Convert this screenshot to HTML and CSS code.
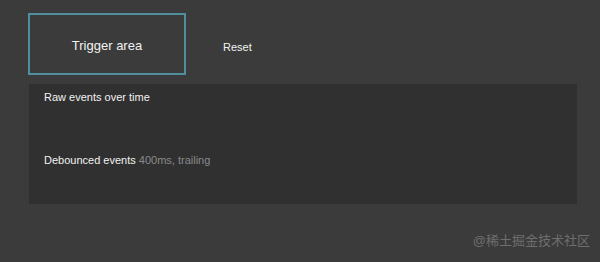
FILE: index.html
```html
<!DOCTYPE html>
<html lang="en">
<head>
  <meta charset="UTF-8">
  <title>Debounce demo</title>
  <link rel="stylesheet" href="styles.css">
</head>
<body>
  <div class="controls">
    <div class="trigger">Trigger area</div>
    <button class="reset">Reset</button>
  </div>

  <div class="timeline">
    <div class="row">
      <div class="label">Raw events over time</div>
    </div>
    <div class="row">
      <div class="label">Debounced events <span class="note">400ms, trailing</span></div>
    </div>
  </div>

  <div class="watermark">@稀土掘金技术社区</div>
</body>
</html>
```

FILE: styles.css
```css
body {
  margin: 0;
  padding: 13px 0 0 28px;
  background-color: #3b3b3b;
  font-family: "Liberation Sans", Arial, sans-serif;
  color: #f2f2f2;
  height: 262px;
  box-sizing: border-box;
  position: relative;
  overflow: hidden;
}

.controls {
  display: flex;
  align-items: center;
}

.trigger {
  width: 158px;
  height: 62px;
  box-sizing: border-box;
  border: 2px solid #4f8e9c;
  padding-top: 3px;
  display: flex;
  align-items: center;
  justify-content: center;
  font-size: 13px;
}

.reset {
  margin: 5px 0 0 37px;
  padding: 0;
  background: none;
  border: none;
  color: #f2f2f2;
  font-family: inherit;
  font-size: 11px;
  cursor: pointer;
}

.timeline {
  margin-top: 9px;
  margin-left: 1px;
  width: 548px;
  height: 120px;
  background-color: #303030;
  padding: 7px 15px 0;
  box-sizing: border-box;
}

.row {
  height: 63px;
}

.label {
  font-size: 11px;
}

.note {
  color: #8a8a8a;
}

.watermark {
  position: absolute;
  right: 10px;
  bottom: 13px;
  font-family: "Liberation Sans", "Noto Sans CJK SC", sans-serif;
  font-size: 13px;
  color: #6e6e6e;
}
```
